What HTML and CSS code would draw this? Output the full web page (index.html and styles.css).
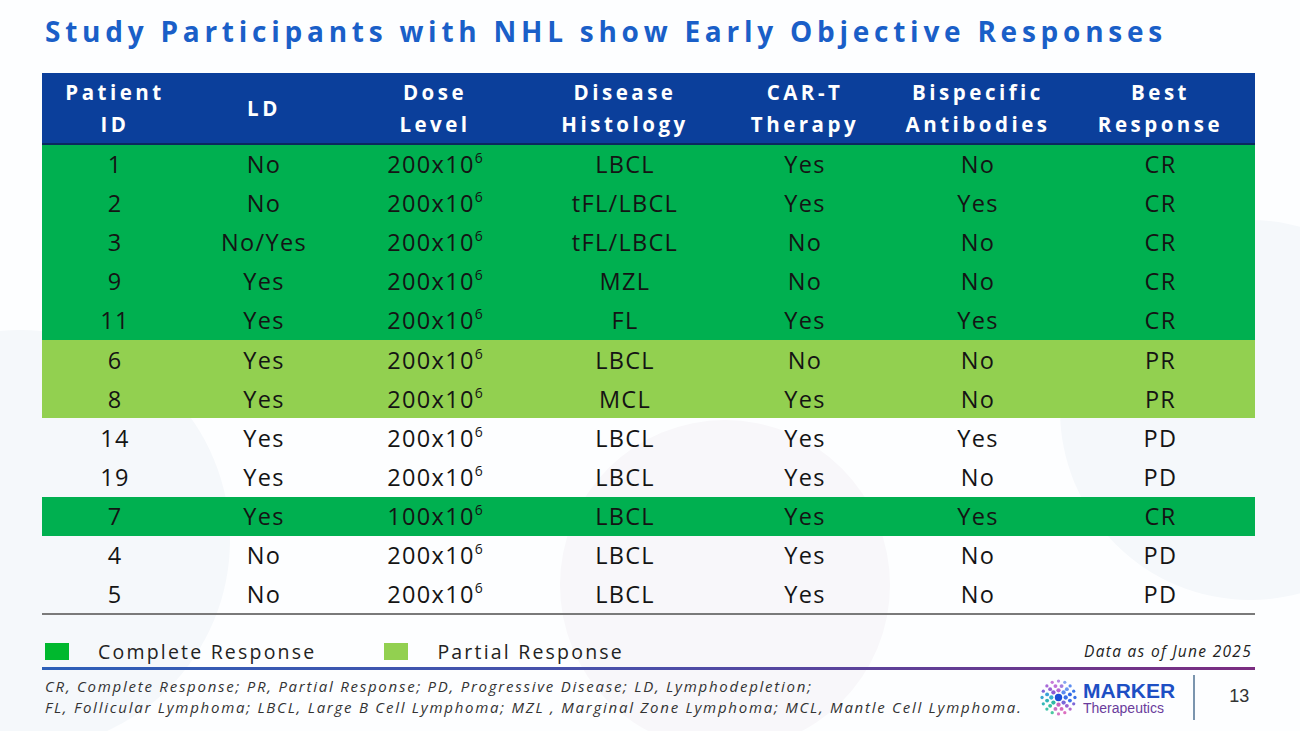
FILE: index.html
```html
<!DOCTYPE html>
<html>
<head>
<meta charset="utf-8">
<link rel="stylesheet" href="styles.css">
</head>
<body>
<div class="slide">
  <div class="decor decor-a"></div>
  <div class="decor decor-b"></div>
  <div class="decor decor-c"></div>
  <h1 class="title">Study Participants with NHL show Early Objective Responses</h1>
  <table class="data">
    <colgroup>
      <col class="c1"><col class="c2"><col class="c3"><col class="c4"><col class="c5"><col class="c6"><col class="c7">
    </colgroup>
    <thead>
      <tr>
        <th>Patient<br>ID</th><th>LD</th><th>Dose<br>Level</th><th>Disease<br>Histology</th><th>CAR-T<br>Therapy</th><th>Bispecific<br>Antibodies</th><th>Best<br>Response</th>
      </tr>
    </thead>
    <tbody>
      <tr class="cr"><td>1</td><td>No</td><td>200x10<sup>6</sup></td><td>LBCL</td><td>Yes</td><td>No</td><td>CR</td></tr>
      <tr class="cr"><td>2</td><td>No</td><td>200x10<sup>6</sup></td><td>tFL/LBCL</td><td>Yes</td><td>Yes</td><td>CR</td></tr>
      <tr class="cr"><td>3</td><td>No/Yes</td><td>200x10<sup>6</sup></td><td>tFL/LBCL</td><td>No</td><td>No</td><td>CR</td></tr>
      <tr class="cr"><td>9</td><td>Yes</td><td>200x10<sup>6</sup></td><td>MZL</td><td>No</td><td>No</td><td>CR</td></tr>
      <tr class="cr"><td>11</td><td>Yes</td><td>200x10<sup>6</sup></td><td>FL</td><td>Yes</td><td>Yes</td><td>CR</td></tr>
      <tr class="pr"><td>6</td><td>Yes</td><td>200x10<sup>6</sup></td><td>LBCL</td><td>No</td><td>No</td><td>PR</td></tr>
      <tr class="pr"><td>8</td><td>Yes</td><td>200x10<sup>6</sup></td><td>MCL</td><td>Yes</td><td>No</td><td>PR</td></tr>
      <tr><td>14</td><td>Yes</td><td>200x10<sup>6</sup></td><td>LBCL</td><td>Yes</td><td>Yes</td><td>PD</td></tr>
      <tr><td>19</td><td>Yes</td><td>200x10<sup>6</sup></td><td>LBCL</td><td>Yes</td><td>No</td><td>PD</td></tr>
      <tr class="cr"><td>7</td><td>Yes</td><td>100x10<sup>6</sup></td><td>LBCL</td><td>Yes</td><td>Yes</td><td>CR</td></tr>
      <tr><td>4</td><td>No</td><td>200x10<sup>6</sup></td><td>LBCL</td><td>Yes</td><td>No</td><td>PD</td></tr>
      <tr class="last"><td>5</td><td>No</td><td>200x10<sup>6</sup></td><td>LBCL</td><td>Yes</td><td>No</td><td>PD</td></tr>
    </tbody>
  </table>
  <div class="legend">
    <div class="key"><span class="swatch sw-cr"></span>Complete Response</div>
    <div class="key"><span class="swatch sw-pr"></span>Partial Response</div>
    <div class="asof">Data as of June 2025</div>
  </div>
  <div class="rule"></div>
  <div class="footer">
    <p class="notes">CR, Complete Response; PR, Partial Response; PD, Progressive Disease; LD, Lymphodepletion;<br>FL, Follicular Lymphoma; LBCL, Large B Cell Lymphoma; MZL , Marginal Zone Lymphoma; MCL, Mantle Cell Lymphoma.</p>
    <div class="brand">
      <svg class="mark" width="37" height="37" viewBox="0 0 36 36">
        <circle cx="18" cy="18" r="3.6" fill="#1d4fd8"/>
        <circle cx="25" cy="18" r="2.1" fill="#3a6ee8"/><circle cx="22.95" cy="22.95" r="2.1" fill="#7a66d8"/>
        <circle cx="18" cy="25" r="2.1" fill="#c864c0"/><circle cx="13.05" cy="22.95" r="2.1" fill="#2fb8a4"/>
        <circle cx="11" cy="18" r="2.1" fill="#38aed0"/><circle cx="13.05" cy="13.05" r="2.1" fill="#8c5ad4"/>
        <circle cx="18" cy="11" r="2.1" fill="#b86ad4"/><circle cx="22.95" cy="13.05" r="2.1" fill="#5a8af0"/>
        <circle cx="29.1" cy="21" r="1.9" fill="#3c72ea"/><circle cx="26.13" cy="26.13" r="1.9" fill="#9a62d0"/>
        <circle cx="20.98" cy="29.1" r="1.9" fill="#d468bc"/><circle cx="15.02" cy="29.1" r="1.9" fill="#c86cc4"/>
        <circle cx="9.87" cy="26.13" r="1.9" fill="#36c0a0"/><circle cx="6.9" cy="21" r="1.9" fill="#30b4b8"/>
        <circle cx="6.9" cy="15" r="1.9" fill="#3aa0d8"/><circle cx="9.87" cy="9.87" r="1.9" fill="#9860d4"/>
        <circle cx="15.02" cy="6.9" r="1.9" fill="#c070d8"/><circle cx="20.98" cy="6.9" r="1.9" fill="#a07ee0"/>
        <circle cx="26.13" cy="9.87" r="1.9" fill="#6a98f0"/><circle cx="29.1" cy="15" r="1.9" fill="#2f66e4"/>
        <circle cx="34" cy="18" r="1.6" fill="#3a70e8"/><circle cx="32.78" cy="24.13" r="1.6" fill="#7c68d8"/>
        <circle cx="29.31" cy="29.31" r="1.6" fill="#b266cc"/><circle cx="24.13" cy="32.78" r="1.6" fill="#dc70c0"/>
        <circle cx="18" cy="34" r="1.6" fill="#d878c4"/><circle cx="11.87" cy="32.78" r="1.6" fill="#4cc8a0"/>
        <circle cx="6.69" cy="29.31" r="1.6" fill="#3ec4a8"/><circle cx="3.22" cy="24.13" r="1.6" fill="#34b8b8"/>
        <circle cx="2" cy="18" r="1.6" fill="#3aa8d0"/><circle cx="3.22" cy="11.87" r="1.6" fill="#8066d8"/>
        <circle cx="6.69" cy="6.69" r="1.6" fill="#a868d8"/><circle cx="11.87" cy="3.22" r="1.6" fill="#c87ad8"/>
        <circle cx="18" cy="2" r="1.6" fill="#b88ae0"/><circle cx="24.13" cy="3.22" r="1.6" fill="#88a6f0"/>
        <circle cx="29.31" cy="6.69" r="1.6" fill="#5a8cf0"/><circle cx="32.78" cy="11.87" r="1.6" fill="#3a78ea"/>
      </svg>
      <div class="wordmark"><span class="wm-top">MARKER</span><span class="wm-bot">Therapeutics</span></div>
    </div>
    <div class="divider"></div>
    <div class="page">13</div>
  </div>
</div>
</body>
</html>
```
FILE: styles.css
```css
html, body {
  margin: 0;
  padding: 0;
  background: #ffffff;
}
.slide {
  position: relative;
  width: 1300px;
  height: 731px;
  overflow: hidden;
  background: #fdfeff;
  padding: 0 45px 0 42px;
  box-sizing: border-box;
  font-family: "Open Sans", "DejaVu Sans", sans-serif;
}
.decor {
  position: absolute;
  border-radius: 50%;
  background: #f5f8fb;
  z-index: 0;
}
.decor-a { width: 420px; height: 420px; left: -190px; top: 330px; }
.decor-b { width: 330px; height: 330px; left: 560px; top: 420px; background: #f8f7fa; }
.decor-c { width: 380px; height: 380px; left: 1060px; top: 220px; }
.title, .data, .legend, .rule, .footer { position: relative; z-index: 1; }
.title {
  margin: 0;
  padding: 13px 0 0 3px;
  height: 60px;
  box-sizing: border-box;
  font-size: 28px;
  font-weight: 700;
  letter-spacing: 4.75px;
  color: #1a5fc8;
  line-height: 36px;
  white-space: nowrap;
}
.data {
  width: 1213px;
  border-collapse: collapse;
  table-layout: fixed;
  margin-top: 13px;
}
.c1 { width: 146px; } .c2 { width: 152px; } .c3 { width: 190px; } .c4 { width: 190px; }
.c5 { width: 170px; } .c6 { width: 176px; } .c7 { width: 189px; }
.data th {
  background: #0b3f9b;
  color: #ffffff;
  font-weight: 700;
  font-size: 20.5px;
  letter-spacing: 3.5px;
  line-height: 32px;
  height: 71px;
  padding: 0;
  text-align: center;
  border-bottom: 2px solid #0a2a5e;
  box-sizing: border-box;
}
.data td {
  height: 39.2px;
  padding: 0;
  text-align: center;
  vertical-align: middle;
  font-size: 23.5px;
  color: #141414;
  line-height: 26px;
  letter-spacing: 1.3px;
  box-sizing: border-box;
}
.data tr.cr td { background: #00b050; }
.data tr.pr td { background: #92d050; }
.data tr.last td { border-bottom: 2px solid #7a7a7a; }
.data sup {
  font-size: 14px;
  line-height: 0;
  vertical-align: 0;
  position: relative;
  top: -10px;
  letter-spacing: 0;
}
.legend {
  display: flex;
  align-items: center;
  height: 32px;
  margin-top: 20px;
  padding-left: 3px;
  font-size: 19.5px;
  letter-spacing: 2.2px;
  color: #222;
}
.key { display: flex; align-items: center; }
.key + .key { margin-left: 68px; }
.swatch {
  display: inline-block;
  width: 24px;
  height: 17px;
  margin-right: 29px;
}
.sw-cr { background: #00b82e; }
.sw-pr { background: #92d050; }
.asof {
  margin-left: auto;
  font-size: 15.5px;
  font-style: italic;
  letter-spacing: 1.3px;
  color: #222;
  margin-right: 3px;
}
.rule {
  height: 3px;
  width: 1213px;
  background: linear-gradient(90deg, #2d5fb8 0%, #4b4ea8 50%, #7a2c80 100%);
}
.footer {
  display: flex;
  align-items: center;
  height: 55px;
  padding-left: 3px;
}
.notes {
  margin: 0;
  font-style: italic;
  font-size: 15px;
  line-height: 21px;
  color: #333;
  width: 990px;
  letter-spacing: 1.75px;
  white-space: nowrap;
  margin-top: -1px;
}
.brand {
  display: flex;
  align-items: center;
  margin-left: 5px;
}
.mark { display: block; margin-right: 6px; }
.wordmark { display: flex; flex-direction: column; font-family: "Liberation Sans", Arial, sans-serif; }
.wm-top { font-size: 21px; font-weight: 700; color: #1d4fc4; line-height: 21px; letter-spacing: 0; }
.wm-bot { font-size: 14px; color: #6a3c9c; line-height: 15px; }
.divider {
  width: 2px;
  height: 45px;
  background: #5a7a9a;
  margin-left: 18px;
  opacity: 0.8;
}
.page {
  margin-left: 34px;
  font-family: "Liberation Sans", Arial, sans-serif;
  font-size: 18px;
  color: #333;
  margin-top: -2px;
}
```
